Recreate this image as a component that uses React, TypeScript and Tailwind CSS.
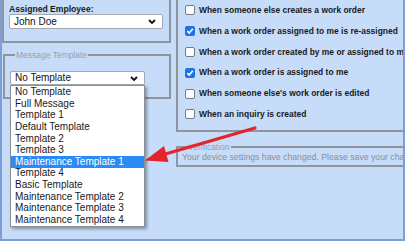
import { ReactNode } from "react";

const templates = [
  "No Template",
  "Full Message",
  "Template 1",
  "Default Template",
  "Template 2",
  "Template 3",
  "Maintenance Template 1",
  "Template 4",
  "Basic Template",
  "Maintenance Template 2",
  "Maintenance Template 3",
  "Maintenance Template 4",
];

const alerts = [
  { label: "When someone else creates a work order", checked: false },
  { label: "When a work order assigned to me is re-assigned", checked: true },
  { label: "When a work order created by me or assigned to me is updated", checked: false },
  { label: "When a work order is assigned to me", checked: true },
  { label: "When someone else's work order is edited", checked: false },
  { label: "When an inquiry is created", checked: false },
];

function Chevron() {
  return (
    <svg width="8" height="5" viewBox="0 0 8 5" className="shrink-0">
      <path d="M1 1 L4 4 L7 1" fill="none" stroke="#111" strokeWidth="1.8" />
    </svg>
  );
}

function FakeSelect({ value, className, children }: { value: string; className: string; children?: ReactNode }) {
  return (
    <div className={`relative flex items-center justify-between bg-white border border-[#a4a9b0] rounded-[2px] pl-[4px] pr-[6px] text-[10px] leading-none text-[#111] ${className}`}>
      <span>{value}</span>
      <Chevron />
      {children}
    </div>
  );
}

function Checkbox({ checked }: { checked: boolean }) {
  if (checked) {
    return (
      <span className="flex items-center justify-center w-[10px] h-[10px] rounded-[2px] bg-[#1a73e8] shrink-0">
        <svg width="8" height="8" viewBox="0 0 8 8">
          <path d="M1.3 4.2 L3.2 6 L6.8 1.8" fill="none" stroke="white" strokeWidth="1.6" />
        </svg>
      </span>
    );
  }
  return <span className="w-[10px] h-[10px] rounded-[2px] bg-white border border-[#767b82] shrink-0" />;
}

export default function App() {
  return (
    <div className="relative w-[405px] h-[241px] overflow-hidden bg-[#c7dcf8] border-x-2 border-b-2 border-[#7b9fd6] font-['Liberation_Sans',Arial,sans-serif]">
      <div className="flex">
        {/* left column */}
        <div className="w-[169px] shrink-0">
          <div className="h-[43px] border-2 border-t-0 border-[#8f959e] pl-[5px] pt-[4px]">
            <div className="text-[8.6px] leading-[10px] font-bold text-[#1a1a1a]">Assigned Employee:</div>
            <FakeSelect value="John Doe" className="w-[154px] h-[15px]" />
          </div>
          <fieldset className="mt-[7px] ml-[1px] w-[168px] h-[49px] border-2 border-[#8f959e] pl-[5px]">
            <legend className="ml-[5px] px-[1px] text-[8.5px] leading-[10px] text-[#9aa0a8]">Message Template</legend>
            <FakeSelect value="No Template" className="mt-[11px] w-[135px] h-[14px] pl-[3px]">
              <div className="absolute left-[-1px] top-[13px] w-[135px] bg-white border border-[#8a8f96] shadow-[2px_2px_3px_rgba(0,0,0,0.35)] py-[0.5px] z-10">
                {templates.map((t) => (
                  <div
                    key={t}
                    className={`h-[11.6px] flex items-center pl-[4px] text-[10px] leading-none ${
                      t === "Maintenance Template 1" ? "bg-[#2a8cf2] text-white" : "text-[#1a1a1a]"
                    }`}
                  >
                    {t}
                  </div>
                ))}
              </div>
            </FakeSelect>
          </fieldset>
        </div>

        {/* right column */}
        <div className="ml-[5px] w-[240px] shrink-0">
          <div className="border-2 border-t-0 border-[#8f959e] pl-[7px] pb-[5px]">
            {alerts.map((a) => (
              <div key={a.label} className="h-[20.8px] flex items-center gap-[4px] whitespace-nowrap">
                <Checkbox checked={a.checked} />
                <span className="text-[8.45px] font-bold text-[#1a1a1a]">{a.label}</span>
              </div>
            ))}
          </div>
          <fieldset className="mt-[10px] border-2 border-[#8f959e] pl-[4px] pb-[2px]">
            <legend className="ml-[5px] px-[1px] text-[8.5px] leading-[10px] text-[#9aa0a8]">Verification</legend>
            <div className="text-[8.7px] leading-[11px] text-[#8a9099] whitespace-nowrap">
              Your device settings have changed. Please save your changes.
            </div>
          </fieldset>
        </div>
      </div>

      {/* red annotation arrow */}
      <svg className="absolute left-0 top-0 pointer-events-none" width="405" height="241" viewBox="0 0 405 241">
        <line x1="253" y1="128" x2="160" y2="155" stroke="#e3242b" strokeWidth="3.2" strokeLinecap="round" />
        <polygon points="143,160.5 162,146 166.5,162" fill="#e3242b" />
      </svg>
    </div>
  );
}
